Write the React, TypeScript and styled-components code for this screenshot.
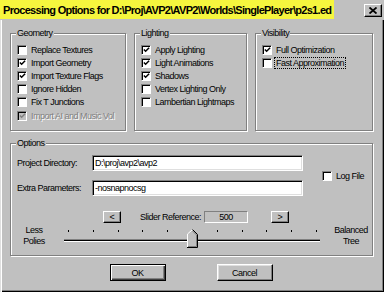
import React from "react";
import styled, { createGlobalStyle, css } from "styled-components";

const GlobalStyle = createGlobalStyle`
  html, body {
    margin: 0;
    padding: 0;
    background: #c0c0c0;
  }
  body {
    font-family: "Liberation Sans", Arial, sans-serif;
  }
`;

const geometry = [
  { label: "Replace Textures", checked: false },
  { label: "Import Geometry", checked: true },
  { label: "Import Texture Flags", checked: true },
  { label: "Ignore Hidden", checked: false },
  { label: "Fix T Junctions", checked: false },
  { label: "Import AI and Music Vol", checked: true, disabled: true },
];

const lighting = [
  { label: "Apply Lighting", checked: true },
  { label: "Light Animations", checked: true },
  { label: "Shadows", checked: true },
  { label: "Vertex Lighting Only", checked: false },
  { label: "Lambertian Lightmaps", checked: false },
];

const visibility = [
  { label: "Full Optimization", checked: true },
  { label: "Fast Approximation", checked: false, focused: true },
];

const TICKS = 11;
const SLIDER_VALUE = 0.5;

type CheckItem = {
  label: string;
  checked: boolean;
  disabled?: boolean;
  focused?: boolean;
};

const Check = ({ item }: { item: CheckItem }) => (
  <CheckRow $disabled={item.disabled}>
    <Box $disabled={item.disabled}>
      {item.checked && (
        <svg width="8" height="8" viewBox="0 0 8 8">
          <polyline
            points="1,3.5 3,5.5 7,1.5"
            fill="none"
            stroke={item.disabled ? "#808080" : "#000"}
            strokeWidth="1.7"
          />
        </svg>
      )}
    </Box>
    <CheckText $focused={item.focused}>{item.label}</CheckText>
  </CheckRow>
);

const App = () => (
  <>
    <GlobalStyle />
    <Window>
      <TitleBar>
        <TitleText>
          Processing Options for D:\Proj\AVP2\AVP2\Worlds\SinglePlayer\p2s1.ed
        </TitleText>
        <CloseButton>
          <svg width="8" height="7" viewBox="0 0 8 7">
            <path d="M0.5 0.5 L7.5 6.5 M7.5 0.5 L0.5 6.5" stroke="#000" strokeWidth="1.8" />
          </svg>
        </CloseButton>
      </TitleBar>

      <Body>
        <TopRow>
          <GroupBox $h={104}>
            <Legend>Geometry</Legend>
            {geometry.map((g) => (
              <Check key={g.label} item={g} />
            ))}
          </GroupBox>
          <GroupBox $h={104}>
            <Legend>Lighting</Legend>
            {lighting.map((g) => (
              <Check key={g.label} item={g} />
            ))}
          </GroupBox>
          <GroupBox $h={104}>
            <Legend>Visibility</Legend>
            {visibility.map((g) => (
              <Check key={g.label} item={g} />
            ))}
          </GroupBox>
        </TopRow>

        <OptionsBox $h={119}>
          <Legend>Options</Legend>
          <FieldGrid>
            <FieldLabel>Project Directory:</FieldLabel>
            <TextInput defaultValue={"D:\\proj\\avp2\\avp2"} />
            <LogFile>
              <Check item={{ label: "Log File", checked: false }} />
            </LogFile>
            <FieldLabel>Extra Parameters:</FieldLabel>
            <TextInput defaultValue="-nosnapnocsg" />
          </FieldGrid>

          <RefRow>
            <SmallButton>&lt;</SmallButton>
            <RefLabel>Slider Reference:</RefLabel>
            <ValueBox>500</ValueBox>
            <SmallButton>&gt;</SmallButton>
          </RefRow>

          <SliderRow>
            <EndLabel>
              Less
              <br />
              Polies
            </EndLabel>
            <Slider>
              <TickRow>
                {Array.from({ length: TICKS }).map((_, i) => (
                  <Tick key={i} />
                ))}
              </TickRow>
              <Track />
              <Thumb style={{ left: `${4 + SLIDER_VALUE * 248 - 5}px` }}>
                <svg width="11" height="19" viewBox="0 0 11 19">
                  <polygon points="0.5,5 5.5,0.5 10.5,5 10.5,18.5 0.5,18.5" fill="#c0c0c0" />
                  <polyline points="0.5,18 0.5,5 5.5,0.5" fill="none" stroke="#fff" />
                  <polyline points="5.5,0.5 10.5,5.5 10.5,18.5 0,18.5" fill="none" stroke="#000" />
                  <polyline points="5.5,2 9.5,6 9.5,17.5 1,17.5" fill="none" stroke="#808080" />
                </svg>
              </Thumb>
            </Slider>
            <EndLabel>
              Balanced
              <br />
              Tree
            </EndLabel>
          </SliderRow>
        </OptionsBox>

        <ButtonRow>
          <Button $default>OK</Button>
          <Button>Cancel</Button>
        </ButtonRow>
      </Body>
    </Window>
  </>
);

export default App;

const textStyle = css`
  font-family: "Liberation Sans", Arial, sans-serif;
  font-size: 9px;
  letter-spacing: -0.5px;
  color: #000;
`;

const Window = styled.div`
  width: 384px;
  height: 292px;
  box-sizing: border-box;
  background: #c0c0c0;
  display: flex;
  flex-direction: column;
  box-shadow: inset 1px 0 0 #dfdfdf, inset 2px 0 0 #fff, inset -1px -1px 0 #000,
    inset -2px -2px 0 #808080;
  overflow: hidden;
`;

const TitleBar = styled.div`
  height: 20px;
  display: flex;
  align-items: flex-start;
  justify-content: space-between;
  background: #c0c0c0;
  padding-right: 2px;
`;

const TitleText = styled.div`
  background: #f6f63e;
  height: 19px;
  line-height: 20px;
  padding: 0 3px 0 3px;
  font-family: "Liberation Sans", Arial, sans-serif;
  font-weight: bold;
  font-size: 11px;
  letter-spacing: -0.7px;
  color: #000;
  white-space: nowrap;
`;

const CloseButton = styled.div`
  margin-top: 4px;
  width: 18px;
  height: 13px;
  box-sizing: border-box;
  display: flex;
  align-items: center;
  justify-content: center;
  background: #c0c0c0;
  border: 1px solid;
  border-color: #fff #000 #000 #fff;
  box-shadow: inset -1px -1px 0 #808080;
`;

const Body = styled.div`
  flex: 1;
  display: flex;
  flex-direction: column;
  padding: 7px 11px 0 10px;
`;

const TopRow = styled.div`
  display: grid;
  grid-template-columns: 116px 113px 118px;
  column-gap: 8px;
`;

const GroupBox = styled.fieldset<{ $h: number }>`
  margin: 0;
  min-width: 0;
  box-sizing: border-box;
  height: ${(p) => p.$h}px;
  padding: 4px 4px 0 6px;
  border: 1px solid #808080;
  box-shadow: inset 1px 1px 0 #fff, 1px 1px 0 #fff;
`;

const Legend = styled.legend`
  ${textStyle};
  padding: 0 1px;
  margin-left: -1px;
  line-height: 12px;
  background: #c0c0c0;
`;

const CheckRow = styled.div<{ $disabled?: boolean }>`
  ${textStyle};
  display: flex;
  align-items: center;
  height: 13.2px;
  gap: 4px;
  white-space: nowrap;
  ${(p) =>
    p.$disabled &&
    css`
      color: #808080;
      text-shadow: 1px 1px 0 #fff;
    `}
`;

const Box = styled.span<{ $disabled?: boolean }>`
  flex: none;
  width: 10px;
  height: 10px;
  box-sizing: border-box;
  background: ${(p) => (p.$disabled ? "#c0c0c0" : "#fff")};
  border: 1px solid;
  border-color: #808080 #fff #fff #808080;
  box-shadow: inset 1px 1px 0 #000;
  display: flex;
  align-items: center;
  justify-content: center;
  padding: 1px 0 0 1px;
`;

const CheckText = styled.span<{ $focused?: boolean }>`
  padding: 0 1px;
  line-height: 10px;
  border: 1px dotted transparent;
  margin-left: -2px;
  ${(p) =>
    p.$focused &&
    css`
      border-color: #000;
    `}
`;

const OptionsBox = styled(GroupBox)`
  margin-top: 6px;
  padding: 6px 2px 0 6px;
  display: flex;
  flex-direction: column;
`;

const FieldGrid = styled.div`
  display: grid;
  grid-template-columns: 75px 211px auto;
  grid-template-rows: 16px 16px;
  row-gap: 9px;
  align-items: center;
`;

const FieldLabel = styled.span`
  ${textStyle};
`;

const TextInput = styled.input`
  ${textStyle};
  box-sizing: border-box;
  width: 211px;
  height: 16px;
  margin: 0;
  padding: 0 2px;
  background: #fff;
  border: 1px solid;
  border-color: #808080 #fff #fff #808080;
  box-shadow: inset 1px 1px 0 #000, inset -1px -1px 0 #dfdfdf;
  outline: none;
`;

const LogFile = styled.div`
  grid-column: 3;
  grid-row: 1 / span 2;
  align-self: center;
  margin-left: 19px;
`;

const RefRow = styled.div`
  display: flex;
  align-items: center;
  height: 12px;
  margin-top: 15px;
  padding-left: 86px;
`;

const SmallButton = styled.div`
  ${textStyle};
  width: 18px;
  height: 12px;
  box-sizing: border-box;
  display: flex;
  align-items: center;
  justify-content: center;
  background: #c0c0c0;
  border: 1px solid;
  border-color: #fff #000 #000 #fff;
  box-shadow: inset -1px -1px 0 #808080;
`;

const RefLabel = styled.span`
  ${textStyle};
  width: 64px;
  margin-left: 19px;
  white-space: nowrap;
`;

const ValueBox = styled.div`
  ${textStyle};
  width: 44px;
  height: 12px;
  box-sizing: border-box;
  margin-right: 23px;
  display: flex;
  align-items: center;
  justify-content: center;
  border: 1px solid;
  border-color: #808080 #fff #fff #808080;
`;

const SliderRow = styled.div`
  display: grid;
  grid-template-columns: 34px 256px 36px;
  column-gap: 13px;
  margin-top: 2px;
  height: 24px;
`;

const EndLabel = styled.div`
  ${textStyle};
  text-align: center;
  line-height: 11px;
  white-space: nowrap;
`;

const Slider = styled.div`
  position: relative;
`;

const TickRow = styled.div`
  display: flex;
  justify-content: space-between;
  padding: 0 3px 0 4px;
  margin-top: 5px;
`;

const Tick = styled.span`
  width: 1px;
  height: 2px;
  background: #000;
`;

const Track = styled.div`
  margin-top: 7px;
  height: 1px;
  background: #000;
  border-top: 1px solid #808080;
  border-bottom: 1px solid #fff;
`;

const Thumb = styled.div`
  position: absolute;
  top: 4px;
  width: 11px;
  height: 19px;
  line-height: 0;
`;

const ButtonRow = styled.div`
  display: flex;
  justify-content: center;
  gap: 51px;
  margin-top: 8px;
  padding-right: 1px;
`;

const Button = styled.button<{ $default?: boolean }>`
  ${textStyle};
  width: 56px;
  height: 17px;
  box-sizing: border-box;
  padding: 0;
  background: #c0c0c0;
  border: 1px solid;
  border-color: #fff #000 #000 #fff;
  box-shadow: inset -1px -1px 0 #808080, inset 1px 1px 0 #dfdfdf;
  ${(p) =>
    p.$default &&
    css`
      border-color: #000;
      box-shadow: inset 1px 1px 0 #fff, inset -1px -1px 0 #404040,
        inset -2px -2px 0 #808080;
    `}
`;
